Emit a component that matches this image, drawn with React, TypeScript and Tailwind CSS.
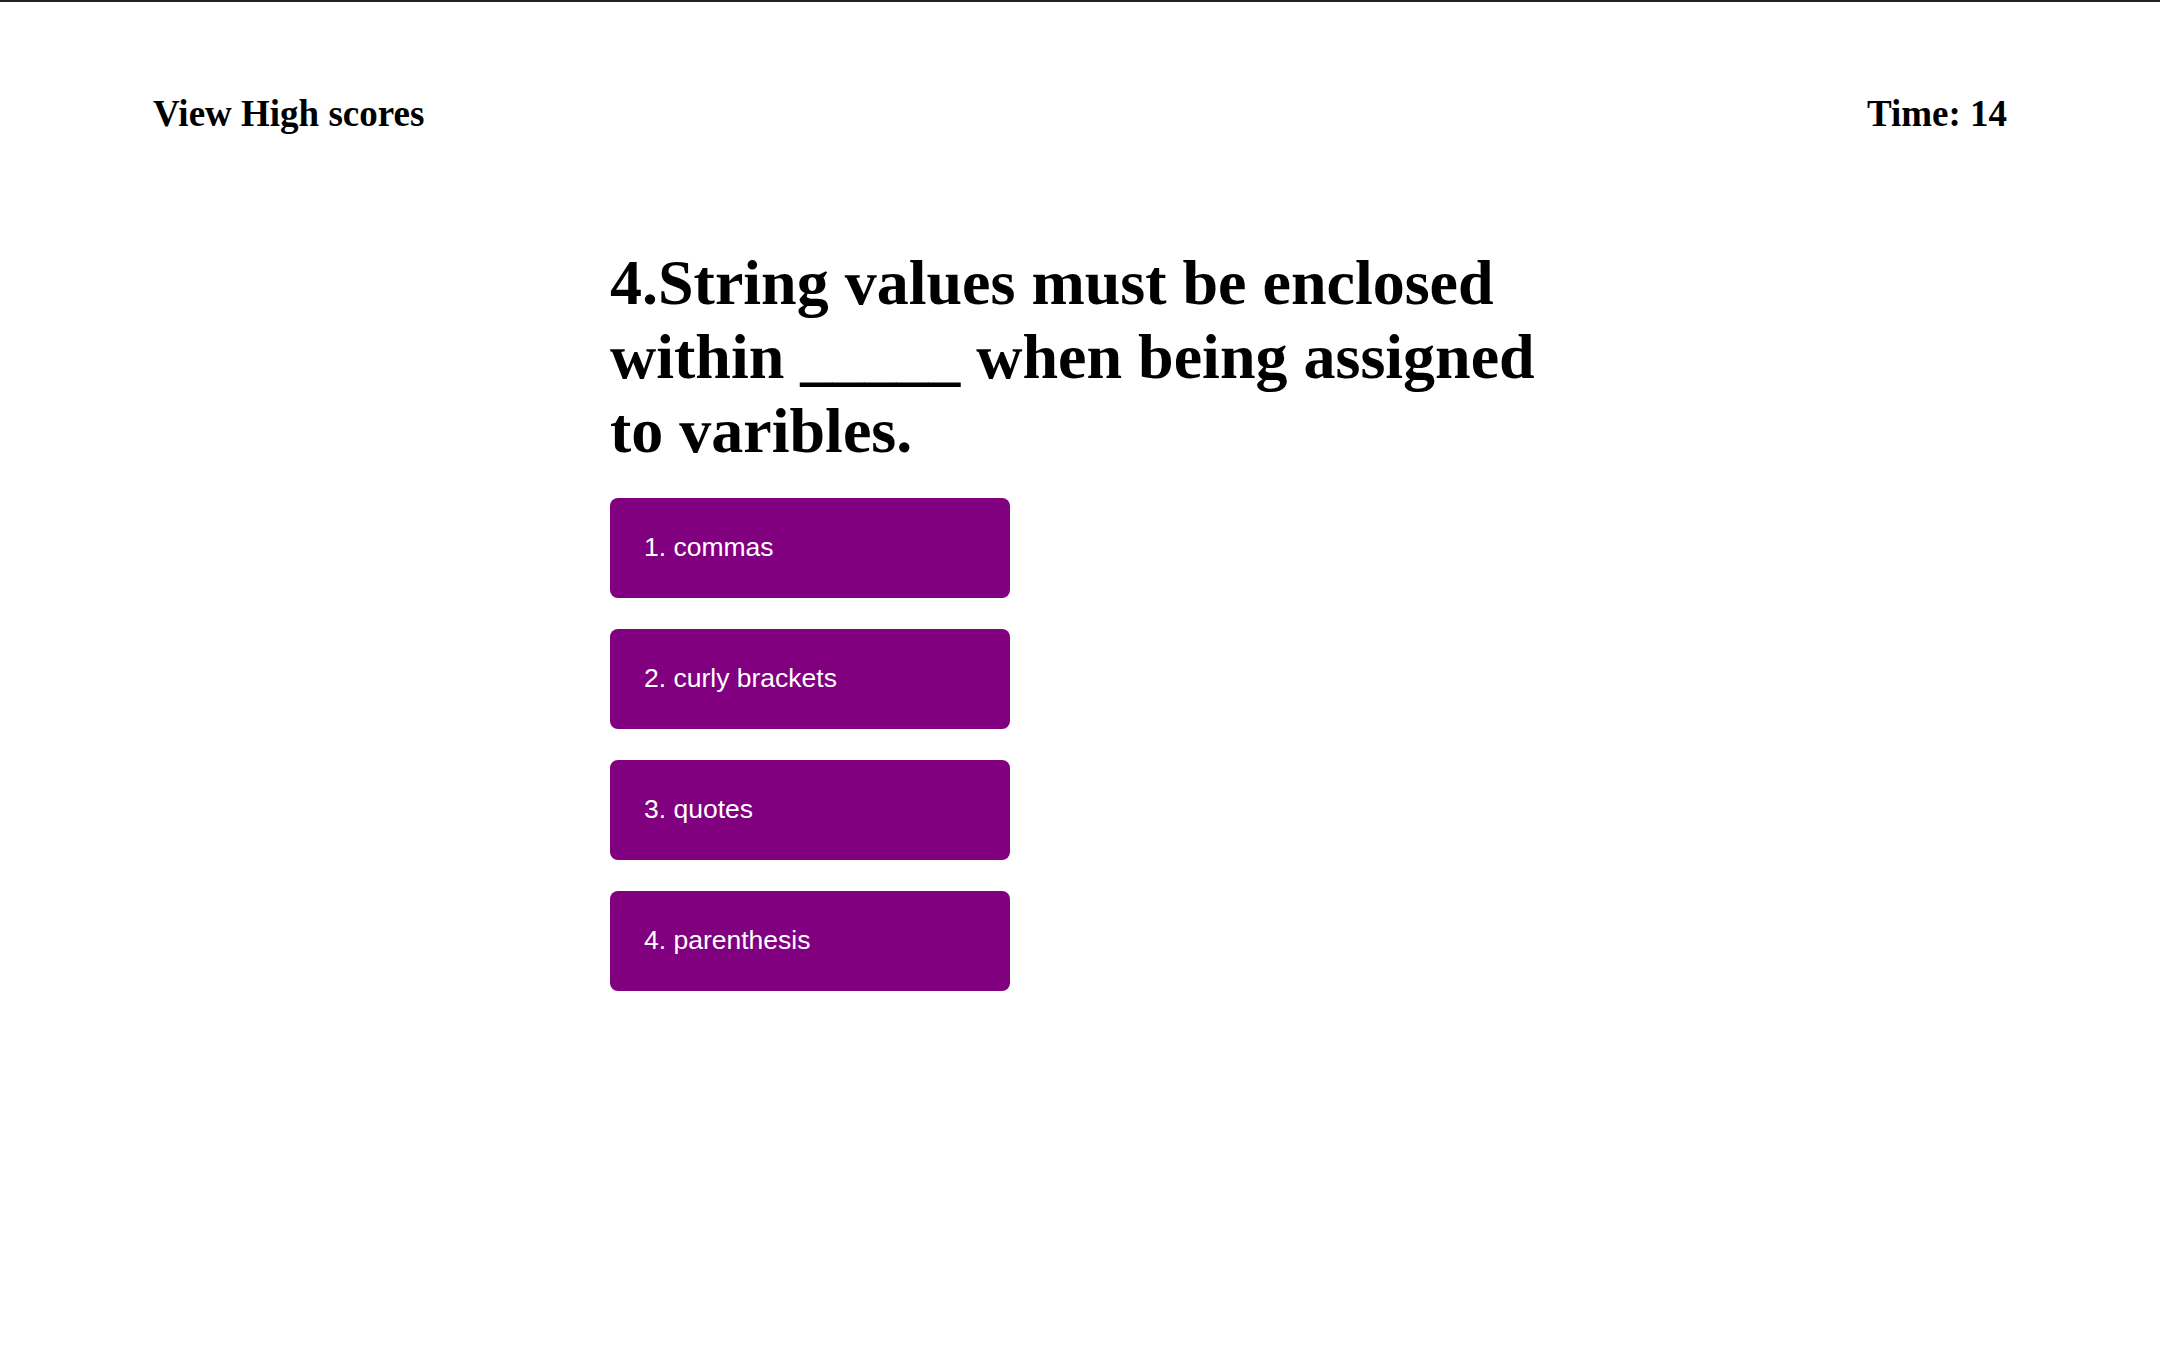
const choices = ["1. commas", "2. curly brackets", "3. quotes", "4. parenthesis"];

export default function App() {
  return (
    <div className="min-h-screen border-t-2 border-[#222] bg-white font-['Liberation_Serif',serif] text-black">
      <header className="flex items-center justify-between px-[153px] pt-[90px] text-[37px] font-bold leading-[normal]">
        <a href="#">View High scores</a>
        <span>Time: 14</span>
      </header>

      <main className="mx-auto mt-[111px] w-[940px]">
        <h1 className="text-[64px] font-bold leading-[normal]">
          4.String values must be enclosed within _____ when being assigned to varibles.
        </h1>
        <div className="mt-[30px] flex flex-col gap-[31px]">
          {choices.map((c) => (
            <button
              key={c}
              className="flex h-[100px] w-[400px] items-center rounded-[8px] bg-[#800080] pl-[34px] text-left font-['Liberation_Sans',Arial,sans-serif] text-[26.5px] text-white"
            >
              {c}
            </button>
          ))}
        </div>
      </main>
    </div>
  );
}
